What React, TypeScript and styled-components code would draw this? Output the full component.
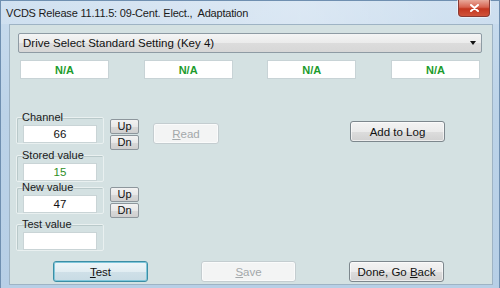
import React from 'react'
import styled, { createGlobalStyle } from 'styled-components'

const Global = createGlobalStyle`
  html, body {
    margin: 0;
    padding: 0;
    background: #ffffff;
  }
  body {
    font-family: 'Liberation Sans', Arial, sans-serif;
  }
`

const Frame = styled.div`
  width: 500px;
  height: 288px;
  box-sizing: border-box;
  display: flex;
  flex-direction: column;
  background: linear-gradient(180deg, #c9dcee 0%, #bcd3e8 40%, #b7cfe6 100%);
  border: 1px solid #6f8fb0;
  border-bottom: none;
  padding: 0 6px 3px 8px;
`

const TitleBar = styled.div`
  height: 23px;
  flex: none;
  display: flex;
  align-items: flex-start;
  justify-content: space-between;
  background: linear-gradient(90deg, rgba(255,255,255,0.15) 0%, rgba(255,255,255,0.35) 60%, rgba(255,255,255,0.1) 100%);
  margin: 0 -6px 0 -8px;
  padding: 0 9px 0 5px;
`

const Title = styled.span`
  font-size: 11px;
  color: #1b1b1b;
  margin-top: 6px;
  letter-spacing: -0.2px;
`

const CloseBtn = styled.div`
  width: 32px;
  height: 17px;
  margin-top: -1px;
  box-sizing: border-box;
  border: 1px solid #8a3a33;
  border-top: none;
  border-radius: 0 0 4px 4px;
  background: linear-gradient(180deg, #e9a99b 0%, #d7624f 45%, #c3361f 55%, #d0533a 100%);
  box-shadow: 0 0 0 1px rgba(255,255,255,0.5);
  display: flex;
  align-items: center;
  justify-content: center;
`

const Client = styled.div`
  flex: 1;
  box-sizing: border-box;
  background: #d4e1e2;
  border: 1px solid #9eb3c4;
  padding: 8px 10px 0 8px;
  display: flex;
  flex-direction: column;
`

const Combo = styled.div`
  height: 20px;
  flex: none;
  box-sizing: border-box;
  border: 1px solid #8e9ba4;
  border-radius: 2px;
  background: linear-gradient(180deg, #f4f5f5 0%, #ebebeb 50%, #dcdcdc 51%, #d7d7d7 100%);
  display: flex;
  align-items: center;
  justify-content: space-between;
  padding: 0 5px 0 4px;
  font-size: 11.5px;
  color: #111;
`

const Arrow = styled.span`
  width: 0;
  height: 0;
  border-left: 3px solid transparent;
  border-right: 3px solid transparent;
  border-top: 4px solid #111;
`

const StatusRow = styled.div`
  display: grid;
  grid-template-columns: repeat(4, 89px);
  justify-content: space-between;
  margin: 7px 2px 0 2px;
`

const StatusBox = styled.div`
  height: 19px;
  background: #ffffff;
  border: 1px solid #c8d3d6;
  box-sizing: border-box;
  display: flex;
  align-items: center;
  justify-content: center;
  color: #1c9b2c;
  font-weight: bold;
  font-size: 11px;
`

const Body = styled.div`
  margin-top: 33px;
  display: flex;
  flex-direction: column;
`

const FieldRow = styled.div<{ $top?: number }>`
  display: flex;
  align-items: flex-start;
  margin-top: ${(p) => p.$top ?? 0}px;
`

const Group = styled.fieldset`
  width: 88px;
  box-sizing: border-box;
  margin: 0 0 0 -2px;
  padding: 0 6px 0 6px;
  border: 1px solid #e9f0f0;
  border-radius: 2px;
  box-shadow: inset 1px 1px 0 #b9c9ca;
  min-width: 0;
`

const Legend = styled.legend`
  font-size: 11px;
  color: #1a1a1a;
  padding: 0;
  margin-left: -1px;
  line-height: 10px;
`

const ValueBox = styled.div<{ $green?: boolean }>`
  height: 18px;
  box-sizing: border-box;
  margin-top: 3px;
  background: #ffffff;
  border: 1px solid #c9d4d6;
  display: flex;
  align-items: center;
  justify-content: center;
  font-size: 11.5px;
  color: ${(p) => (p.$green ? '#2f8f1f' : '#111')};
`

const StepStack = styled.div<{ $top: number }>`
  display: flex;
  flex-direction: column;
  gap: 1px;
  margin: ${(p) => p.$top}px 0 0 6px;
`

const Step = styled.button`
  width: 29px;
  height: 15px;
  padding: 0;
  box-sizing: border-box;
  border: 1px solid #8d969c;
  border-radius: 2px;
  background: linear-gradient(180deg, #f2f2f2 0%, #e8e8e8 50%, #d9d9d9 51%, #cfcfcf 100%);
  font-family: 'Liberation Sans', Arial, sans-serif;
  font-size: 11px;
  color: #111;
  line-height: 13px;
`

const Btn = styled.button<{ $w?: number; $disabled?: boolean; $focus?: boolean }>`
  width: ${(p) => p.$w ?? 95}px;
  height: 21px;
  padding: 0;
  box-sizing: border-box;
  border-radius: 3px;
  font-family: 'Liberation Sans', Arial, sans-serif;
  font-size: 11.5px;
  border: 1px solid ${(p) => (p.$disabled ? '#c4cdd0' : p.$focus ? '#3b8ea5' : '#7d878d')};
  color: ${(p) => (p.$disabled ? '#a3a8aa' : '#111')};
  background: ${(p) =>
    p.$disabled
      ? '#f3f4f4'
      : p.$focus
      ? 'linear-gradient(180deg, #eef6f9 0%, #e1edf2 50%, #cfe0e8 51%, #c8dbe4 100%)'
      : 'linear-gradient(180deg, #f3f3f3 0%, #ebebeb 50%, #dddddd 51%, #d1d1d1 100%)'};
  box-shadow: ${(p) => (p.$focus ? 'inset 0 0 0 1px #7fc6da' : 'inset 0 0 0 1px rgba(255,255,255,0.6)')};
`

const U = styled.span`
  text-decoration: underline;
`

const ReadSlot = styled.div`
  margin: 11px 0 0 14px;
`

const LogSlot = styled.div`
  margin: 9px 0 0 auto;
  padding-right: 37px;
`

const BottomRow = styled.div`
  margin-top: 10px;
  display: grid;
  grid-template-columns: repeat(3, 95px);
  column-gap: 53px;
  padding-left: 35px;
`

export default function App() {
  return (
    <>
      <Global />
      <Frame>
        <TitleBar>
          <Title>VCDS Release 11.11.5: 09-Cent. Elect.,&nbsp; Adaptation</Title>
          <CloseBtn>
            <svg width="9" height="8" viewBox="0 0 9 8">
              <path d="M1 1 L8 7 M8 1 L1 7" stroke="#ffffff" strokeWidth="2" strokeLinecap="round" />
            </svg>
          </CloseBtn>
        </TitleBar>
        <Client>
          <Combo>
            <span>Drive Select Standard Setting (Key 4)</span>
            <Arrow />
          </Combo>
          <StatusRow>
            <StatusBox>N/A</StatusBox>
            <StatusBox>N/A</StatusBox>
            <StatusBox>N/A</StatusBox>
            <StatusBox>N/A</StatusBox>
          </StatusRow>
          <Body>
            <FieldRow>
              <Group>
                <Legend>Channel</Legend>
                <ValueBox>66</ValueBox>
              </Group>
              <StepStack $top={7}>
                <Step>Up</Step>
                <Step>Dn</Step>
              </StepStack>
              <ReadSlot>
                <Btn $w={66} $disabled>
                  <U>R</U>ead
                </Btn>
              </ReadSlot>
              <LogSlot>
                <Btn>Add to Log</Btn>
              </LogSlot>
            </FieldRow>
            <FieldRow>
              <Group>
                <Legend>Stored value</Legend>
                <ValueBox $green>15</ValueBox>
              </Group>
            </FieldRow>
            <FieldRow>
              <Group>
                <Legend>New value</Legend>
                <ValueBox>47</ValueBox>
              </Group>
              <StepStack $top={5}>
                <Step>Up</Step>
                <Step>Dn</Step>
              </StepStack>
            </FieldRow>
            <FieldRow $top={1}>
              <Group>
                <Legend>Test value</Legend>
                <ValueBox />
              </Group>
            </FieldRow>
          </Body>
          <BottomRow>
            <Btn $focus>
              <U>T</U>est
            </Btn>
            <Btn $disabled>
              <U>S</U>ave
            </Btn>
            <Btn>
              Done, Go <U>B</U>ack
            </Btn>
          </BottomRow>
        </Client>
      </Frame>
    </>
  )
}
